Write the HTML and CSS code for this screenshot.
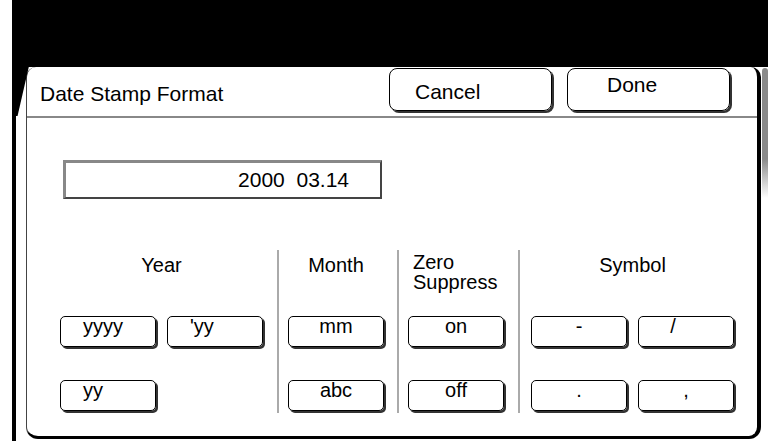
FILE: index.html
```html
<!DOCTYPE html>
<html lang="en">
<head>
    <meta charset="UTF-8">
    <meta name="viewport" content="width=device-width, initial-scale=1.0">
    <title>Date Stamp Format</title>
    <link rel="stylesheet" href="styles.css">
</head>
<body>

    <div class="screen">
        <div class="panel">

            <!-- title bar -->
            <div class="header">
                <div class="title">Date Stamp Format</div>
                <div class="hbtn cancel">Cancel</div>
                <div class="hbtn done">Done</div>
            </div>

            <!-- preview of the stamp -->
            <div class="field">2000  03.14</div>

            <!-- option columns -->
            <div class="columns">
                <div class="col col-year">
                    <div class="group two">
                        <div class="col-head">Year</div>
                        <div class="btn left">yyyy</div>
                        <div class="btn left">'yy</div>
                        <div class="btn left">yy</div>
                    </div>
                </div>
                <div class="col col-month">
                    <div class="group">
                        <div class="col-head">Month</div>
                        <div class="btn">mm</div>
                        <div class="btn">abc</div>
                    </div>
                </div>
                <div class="col col-zero">
                    <div class="group">
                        <div class="col-head zero">Zero<br>Suppress</div>
                        <div class="btn">on</div>
                        <div class="btn">off</div>
                    </div>
                </div>
                <div class="col col-symbol">
                    <div class="group two">
                        <div class="col-head">Symbol</div>
                        <div class="btn">-</div>
                        <div class="btn slash">/</div>
                        <div class="btn">.</div>
                        <div class="btn">,</div>
                    </div>
                </div>
            </div>

        </div>
    </div>

</body>
</html>
```

FILE: styles.css
```css
body, html {
    margin: 0;
    height: 100%;
    overflow: hidden;
    background-color: #fff;
    font-family: "Liberation Sans", Arial, sans-serif;
    color: #000;
}

.screen {
    position: relative;
    box-sizing: border-box;
    height: 441px;
    margin-left: 12px;
    padding: 67px 0 0 10px;
    border-left: 4px solid #000;
    background: linear-gradient(#000, #000) top / 100% 67px no-repeat, #fff;
}

/* slanted black edge under the top band */
.screen::before {
    content: "";
    position: absolute;
    left: 0;
    top: 66px;
    width: 13px;
    height: 50px;
    background-color: #000;
    clip-path: polygon(0 0, 100% 0, 12% 100%, 0 100%);
}

/* grey bevel right of the panel */
.screen::after {
    content: "";
    position: absolute;
    right: 0;
    top: 68px;
    width: 6px;
    height: 130px;
    border-radius: 4px 4px 0 0;
    background: linear-gradient(#8a8a8a, #8a8a8a 70%, #fff);
}

.panel {
    box-sizing: border-box;
    width: 735px;
    height: 372px;
    background-color: #fff;
    border-left: 1px solid #444;
    border-right: 4px solid #000;
    border-bottom: 3px solid #000;
    border-radius: 10px 10px 12px 12px;
}

.header {
    display: flex;
    align-items: center;
    height: 49px;
    padding-left: 13px;
    border-bottom: 2px solid #888;
}

.title {
    flex: 1;
    font-size: 21px;
    line-height: 21px;
    padding-top: 3px;
}

.hbtn {
    box-sizing: border-box;
    align-self: flex-start;
    width: 163px;
    height: 43px;
    margin-top: 1px;
    border: 1px solid #000;
    border-radius: 8px;
    box-shadow: 2px 2px 0 #333;
    font-size: 21px;
    line-height: 21px;
}

.cancel {
    padding: 12px 0 0 25px;
}

.done {
    margin: 1px 27px 0 15px;
    padding: 5px 0 0 39px;
}

.field {
    box-sizing: border-box;
    width: 319px;
    height: 39px;
    margin: 42px 0 0 36px;
    padding: 6px 31px 0 0;
    border-top: 3px solid #888;
    border-left: 3px solid #888;
    border-right: 2px solid #444;
    border-bottom: 2px solid #444;
    font-size: 21px;
    line-height: 22px;
    text-align: right;
    white-space: pre;
}

.columns {
    display: grid;
    grid-template-columns: 250px 120px 121px 1fr;
    height: 163px;
    margin-top: 51px;
}

.col {
    padding-left: 9px;
}

.col + .col {
    border-left: 2px solid #aaa;
}

.col-year {
    padding-left: 33px;
}

.col-symbol {
    padding-left: 11px;
}

.group {
    display: grid;
    grid-template-columns: 96px;
    row-gap: 33px;
}

.group.two {
    grid-template-columns: 96px 96px;
    column-gap: 11px;
}

.col-head {
    grid-column: 1 / -1;
    height: 66px;
    margin-bottom: -33px;
    box-sizing: border-box;
    padding-top: 5px;
    font-size: 20px;
    line-height: 20px;
    text-align: center;
}

.col-head.zero {
    padding: 2px 0 0 5px;
    text-align: left;
}

.btn {
    box-sizing: border-box;
    height: 31px;
    border: 1px solid #000;
    border-radius: 5px;
    box-shadow: 2px 2px 0 #333;
    font-size: 20px;
    line-height: 19px;
    text-align: center;
}

.btn.left {
    padding-left: 22px;
    text-align: left;
}

.btn.slash {
    padding-right: 26px;
}
```
